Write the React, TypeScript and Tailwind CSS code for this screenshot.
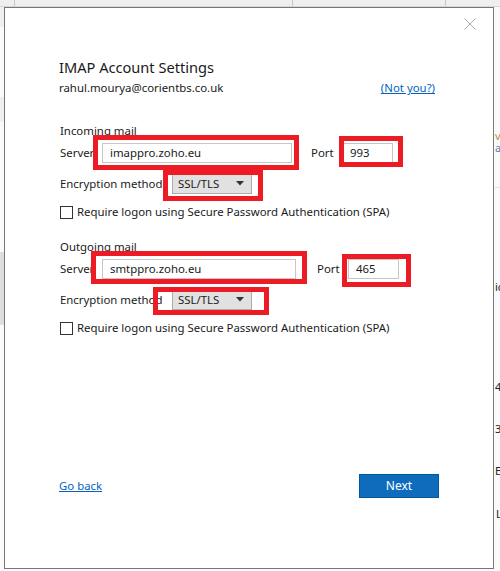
import React from "react";

const font = { fontFamily: '"Segoe UI", "Noto Sans", "Open Sans", sans-serif' };

function RedBox({ className }: { className: string }) {
  return <div className={`pointer-events-none absolute border-[5px] border-[#ed1c24] ${className}`} />;
}

function TextInput({ value, width }: { value: string; width: string }) {
  return (
    <div className={`flex h-[20px] items-center border border-[#c6c6c6] bg-white pl-[7px] text-[11.4px] text-[#1a1a1a] ${width}`}>
      {value}
    </div>
  );
}

function Select() {
  return (
    <div className="flex h-[21px] w-[80px] items-center justify-between border border-[#adadad] bg-[#e1e1e1] pl-[5px] pr-[7px] text-[11.4px] text-[#1a1a1a]">
      <span>SSL/TLS</span>
      <svg width="8" height="5" viewBox="0 0 8 5">
        <path d="M0 0 L8 0 L4 4.5 Z" fill="#333" />
      </svg>
    </div>
  );
}

function Checkbox({ label }: { label: string }) {
  return (
    <div className="flex h-[16px] items-center">
      <div className="ml-[1px] h-[13px] w-[13px] border border-[#333] bg-white" />
      <span className="ml-[4px] text-[11.4px] text-[#1a1a1a]">{label}</span>
    </div>
  );
}

export default function App() {
  return (
    <div className="relative h-[571px] w-[500px] overflow-hidden bg-[#fafafa]" style={font}>
      {/* ribbon strip behind the dialog */}
      <div className="flex h-[7px] border-b border-[#d6d6d6] bg-[#f0efee]">
        <div className="w-[15px] border-r border-[#c8c8c8]" />
        <div className="w-[278px] border-r border-[#c8c8c8]" />
        <div className="w-[153px] border-r border-[#c8c8c8]" />
      </div>

      <div className="flex">
        <div className="flex w-[4px] flex-col">
          <div className="h-[20px] bg-[#f0f0f0]" />
          <div className="h-[70px] bg-[#fafafa]" />
          <div className="h-[25px] bg-[#efefef]" />
          <div className="h-[130px] bg-[#fafafa]" />
          <div className="h-[73px] bg-[#dedede]" />
        </div>

        {/* dialog */}
        <div className="relative flex h-[562px] w-[490px] flex-col border border-[#777] bg-white pl-[54px] text-[#1a1a1a]">
          <button className="absolute right-[16px] top-[9px] p-[1px]">
            <svg width="12" height="12" viewBox="0 0 12 12">
              <path d="M0.5 0.5 L11.5 11.5 M11.5 0.5 L0.5 11.5" stroke="#a8a8a8" strokeWidth="1" />
            </svg>
          </button>

          <div className="mt-[49px] h-[20px] text-[14.6px] leading-[20px]">IMAP Account Settings</div>

          <div className="mt-[3px] flex h-[16px] w-[376px] items-center justify-between text-[11.4px]">
            <span>rahul.mourya@corientbs.co.uk</span>
            <span className="text-[#0563c1] underline">(Not you?)</span>
          </div>

          <div className="ml-[1px] mt-[27px] h-[16px] text-[11.4px] leading-[16px]">Incoming mail</div>

          <div className="ml-[1px] mt-[4px] flex h-[20px] items-center text-[11.4px]">
            <span className="w-[42px]">Server</span>
            <TextInput value="imappro.zoho.eu" width="w-[190px]" />
            <span className="ml-[19px] w-[31px]">Port</span>
            <TextInput value="993" width="w-[51px]" />
          </div>

          <div className="ml-[1px] mt-[10px] flex h-[21px] items-center text-[11.4px]">
            <span className="w-[112px]">Encryption method</span>
            <Select />
          </div>

          <div className="mt-[10px]">
            <Checkbox label="Require logon using Secure Password Authentication (SPA)" />
          </div>

          <div className="ml-[1px] mt-[19px] h-[16px] text-[11.4px] leading-[16px]">Outgoing mail</div>

          <div className="ml-[1px] mt-[4px] flex h-[20px] items-center text-[11.4px]">
            <span className="w-[42px]">Server</span>
            <TextInput value="smtppro.zoho.eu" width="w-[194px]" />
            <span className="ml-[21px] w-[31px]">Port</span>
            <TextInput value="465" width="w-[51px]" />
          </div>

          <div className="ml-[1px] mt-[10px] flex h-[21px] items-center text-[11.4px]">
            <span className="w-[112px]">Encryption method</span>
            <Select />
          </div>

          <div className="mt-[10px]">
            <Checkbox label="Require logon using Secure Password Authentication (SPA)" />
          </div>

          <div className="mt-auto mb-[70px] flex w-[380px] items-center justify-between">
            <span className="text-[11.4px] text-[#0563c1] underline">Go back</span>
            <button className="h-[24px] w-[80px] border border-[#005a9e] bg-[#0f6cbd] text-[12px] text-white">
              Next
            </button>
          </div>
        </div>

        {/* spreadsheet peeking out on the right */}
        <div className="flex w-[6px] flex-col overflow-hidden pl-[1px] text-[11px] leading-[12px] text-[#222]">
          <div className="h-[123px] shrink-0" />
          <span className="text-[#c08a3e]">v</span>
          <span className="text-[#5b7fa8]">a</span>
          <div className="h-[34px] shrink-0 border-b border-[#e0e0e0]" />
          <div className="h-[93px] shrink-0" />
          <span>ic</span>
          <div className="h-[88px] shrink-0" />
          <span>4</span>
          <div className="h-[30px] shrink-0" />
          <span>3</span>
          <div className="h-[30px] shrink-0" />
          <span>E</span>
          <div className="h-[31px] shrink-0" />
          <span className="pl-[1px]">L</span>
        </div>
      </div>

      {/* annotation boxes */}
      <RedBox className="left-[93px] top-[135px] h-[35px] w-[206px]" />
      <RedBox className="left-[339px] top-[136px] h-[31px] w-[64px]" />
      <RedBox className="left-[163px] top-[170px] h-[31px] w-[100px]" />
      <RedBox className="left-[91px] top-[251px] h-[33px] w-[216px]" />
      <RedBox className="left-[342px] top-[254px] h-[33px] w-[69px]" />
      <RedBox className="left-[153px] top-[287px] h-[28px] w-[116px]" />
    </div>
  );
}
